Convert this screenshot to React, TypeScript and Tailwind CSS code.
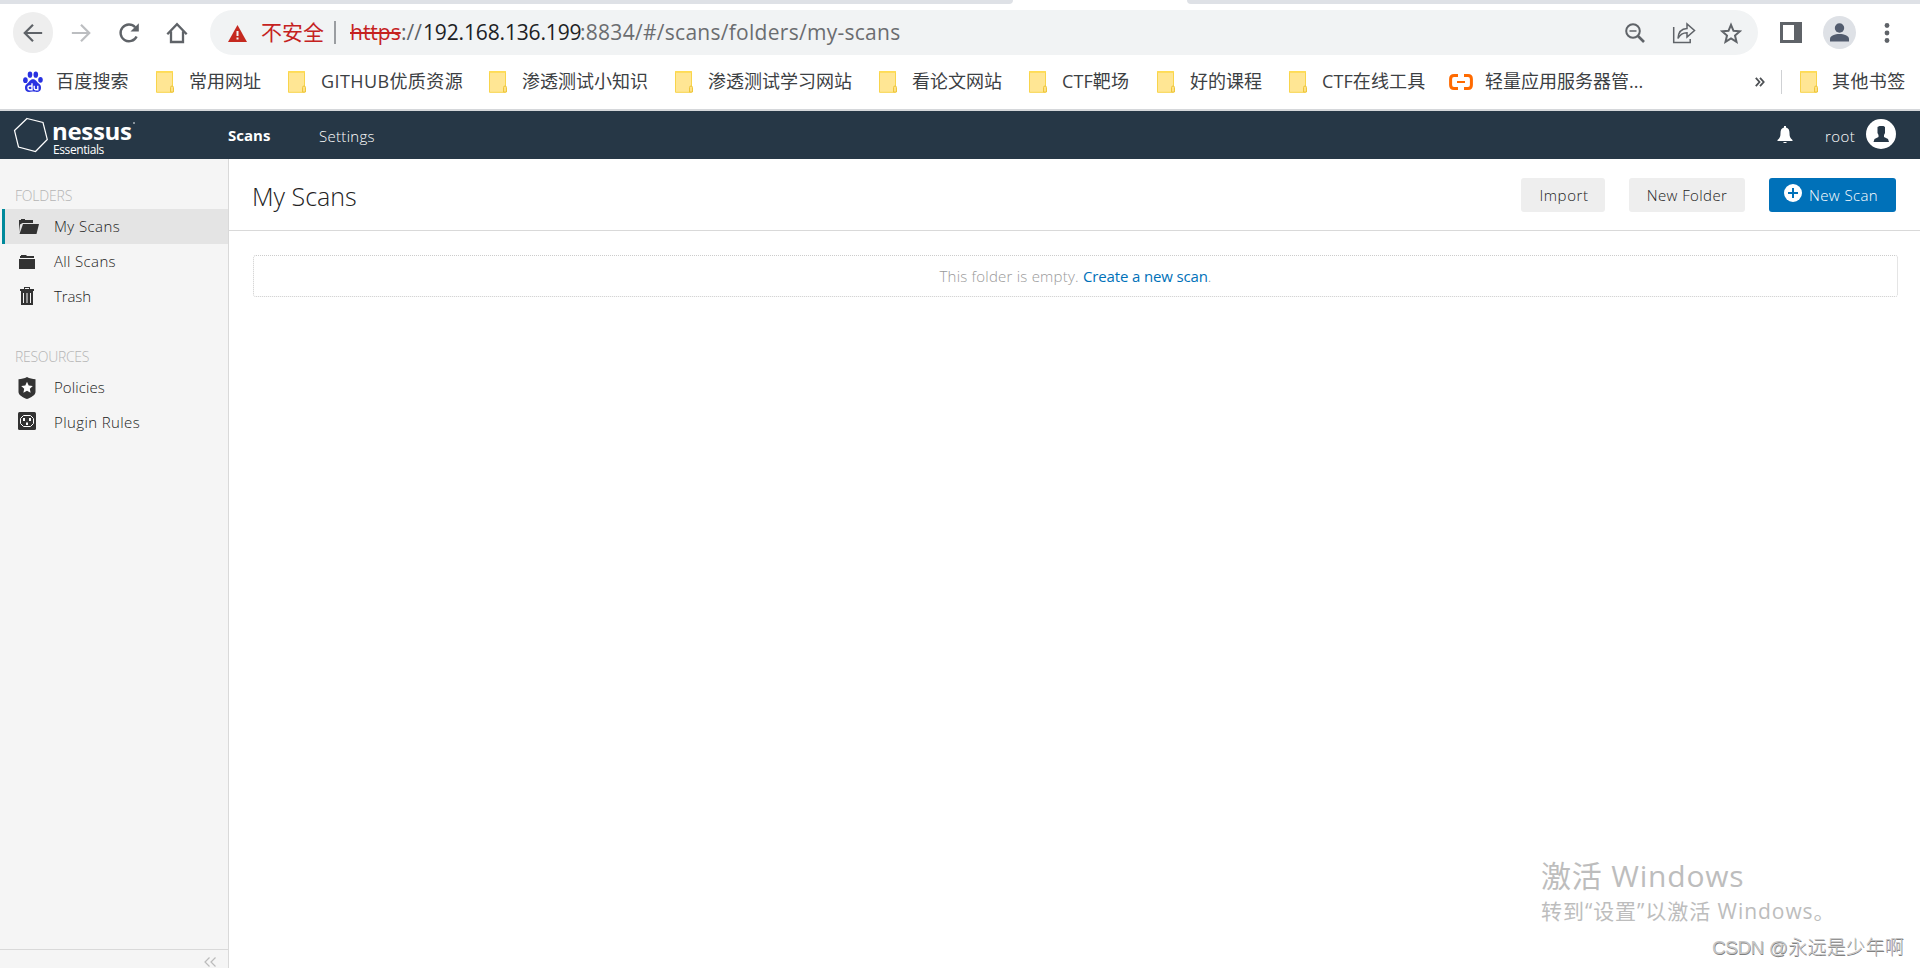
import React from "react";

const UI = "font-['Open_Sans','Noto_Sans_CJK_SC',sans-serif]";

function BackIcon({ flip = false, className = "" }: { flip?: boolean; className?: string }) {
  return (
    <svg width="24" height="24" viewBox="0 0 24 24" className={className} fill="none" stroke="currentColor" strokeWidth="2.4">
      {flip ? <path d="M2 12h18M12 3l9 9-9 9" /> : <path d="M22 12H4M12 3l-9 9 9 9" />}
    </svg>
  );
}

function ReloadIcon() {
  return (
    <svg width="22" height="22" viewBox="0 0 22 22" fill="none" className="text-[#5f6368]">
      <path d="M18.6 14.4A8.4 8.4 0 1 1 17.2 5.2" stroke="currentColor" strokeWidth="2.4" />
      <path d="M20.8 1.2v8.3h-8.3z" fill="currentColor" />
    </svg>
  );
}

function HomeIcon() {
  return (
    <svg width="22" height="22" viewBox="0 0 22 22" fill="none" className="text-[#5f6368]">
      <path d="M1.3 12.2 11 2.2l9.7 10M5 9.500V20h12V9.500" stroke="currentColor" strokeWidth="2.300" />
    </svg>
  );
}

function FolderMark() {
  return (
    <svg width="19" height="22" viewBox="0 0 19 22" className="shrink-0">
      <path d="M.5.8h16v20.500H.5z" fill="#ffe694" stroke="#f8d44c" />
      <path d="M0 .9h17" stroke="#ffdb4f" strokeWidth="1.500" />
      <path d="M14.500 21v-4.500q0-1.500 1.500-1.500t1.500 1.500V21z" fill="#ffe082" stroke="#edc63c" />
    </svg>
  );
}

function BaiduMark() {
  return (
    <svg width="20" height="22" viewBox="0 0 20 22" className="shrink-0">
      <g fill="#2932e1">
        <ellipse cx="2.400" cy="9.200" rx="2.300" ry="2.900" />
        <ellipse cx="7" cy="3.700" rx="2.300" ry="3.100" />
        <ellipse cx="12.800" cy="3.700" rx="2.300" ry="3.100" />
        <ellipse cx="17.500" cy="8.800" rx="2.300" ry="2.900" />
        <path d="M10 8.200c3 0 3.700 2.600 5.800 4.300 1.600 1.300 2.400 2.500 2.200 4.800-.2 2.700-2 3.700-4.300 3.600-1.500 0-2-.3-3.700-.3s-2.200.3-3.700.3C4 21 2.200 20 2 17.300c-.2-2.300.6-3.500 2.200-4.800C6.300 10.800 7 8.200 10 8.200z" />
      </g>
      <path d="M9 12.300v6.400H6.800a1.700 1.700 0 0 1 0-3.700H9M11.200 14.800v2.500q0 1.400 1.400 1.400h2.200v-3.900" fill="none" stroke="#fff" strokeWidth="1.400" />
    </svg>
  );
}

function CloudMark() {
  return (
    <svg width="24" height="16" viewBox="0 0 24 16" className="shrink-0" fill="none" stroke="#ff6a00">
      <path d="M9 1.500H5Q1.600 1.500 1.600 5v6q0 3.500 3.400 3.500h4M15 1.500h4q3.400 0 3.400 3.500v6q0 3.500-3.400 3.500h-4" strokeWidth="3" />
      <path d="M8 8h8" strokeWidth="2" />
    </svg>
  );
}

const marks = [
  { label: "常用网址", box: "w-[132px]", sp: "tracking-[0px]" },
  { label: "GITHUB优质资源", box: "w-[201px]", sp: "tracking-[0.4px]" },
  { label: "渗透测试小知识", box: "w-[186px]", sp: "tracking-[0px]" },
  { label: "渗透测试学习网站", box: "w-[204px]", sp: "tracking-[0px]" },
  { label: "看论文网站", box: "w-[150px]", sp: "tracking-[0px]" },
  { label: "CTF靶场", box: "w-[128px]", sp: "tracking-[0.1px]" },
  { label: "好的课程", box: "w-[132px]", sp: "tracking-[0px]" },
  { label: "CTF在线工具", box: "w-[160px]", sp: "tracking-[0.1px]" },
];

function Browser() {
  return (
    <header className="h-[111px] shrink-0 border-b-2 border-[#d5d7da] bg-white">
      <div className="flex h-1 justify-between">
        <div className="w-[1013px] rounded-br-[5px] bg-[#dee1e6]" />
        <div className="w-[733px] rounded-bl-[5px] bg-[#dee1e6]" />
      </div>
      <div className="flex h-[57px] items-center">
        <div className="ml-[13px] flex h-[41px] w-10 shrink-0 items-center justify-center rounded-full bg-[#eeeeee]">
          <BackIcon className="h-[22px] w-[22px] text-[#5f6368]" />
        </div>
        <BackIcon flip className="ml-[17px] h-[22px] w-[22px] text-[#bcbec1]" />
        <div className="ml-[26px]"><ReloadIcon /></div>
        <div className="ml-[26px]"><HomeIcon /></div>
        <div className="ml-[22px] flex h-[45px] w-[1548px] shrink-0 items-center rounded-full bg-[#f1f3f4] pl-[18px] text-[21px] whitespace-nowrap">
          <svg width="19" height="17" viewBox="0 0 19 17" className="mt-[2px]">
            <path d="M9.500 0 19 17H0z" fill="#c5291f" />
            <path d="M9.500 6v5M9.500 12.500v2" stroke="#f1f3f4" strokeWidth="2" />
          </svg>
          <span className="ml-[14px] w-[73px] text-[#c5221f]">不安全</span>
          <span className="h-[23px] w-[2px] bg-[#9a9da1]" />
          <span className="ml-[14px] w-[51px] text-[#c5221f] line-through">https</span>
          <span className="w-[22px] text-[#5f6368]">://</span>
          <span className="w-[157px] tracking-[-0.15px] text-[#202124]">192.168.136.199</span>
          <span className="w-[1045px] tracking-[0.28px] text-[#6b6d70]">:8834/#/scans/folders/my-scans</span>
          <svg width="20" height="20" viewBox="0 0 20 20" fill="none" stroke="#5f6368" className="shrink-0">
            <circle cx="8" cy="8" r="6.800" strokeWidth="2" />
            <path d="m13 13 6 6" strokeWidth="2.600" />
            <path d="M4.500 8h7" strokeWidth="1.500" />
          </svg>
          <svg width="24" height="22" viewBox="0 0 24 22" fill="none" stroke="#5f6368" strokeWidth="1.500" className="ml-[27px] shrink-0">
            <path d="M1.700 5v15.500h16.500V17" />
            <path d="M6 16.500c.3-6 3.500-9.800 9-10V2l7.500 6.500L15 15v-4.300c-4.500 0-7 1.800-9 5.800z" />
          </svg>
          <svg width="22" height="22" viewBox="0 0 22 22" fill="none" stroke="#5f6368" strokeWidth="2" className="ml-[24px] shrink-0">
            <path d="m11 2.800 2.500 6 6.400.5-4.900 4.200 1.500 6.300-5.500-3.400-5.500 3.400L7 13.500 2.100 9.300l6.400-.5z" />
          </svg>
        </div>
        <svg width="22" height="21" viewBox="0 0 22 21" className="ml-[22px]">
          <path d="M0 0h22v21H0z" fill="#5f6368" />
          <path d="M3 3h11v15H3z" fill="#fff" />
        </svg>
        <svg width="33" height="33" viewBox="0 0 33 33" className="ml-[21px]">
          <circle cx="16.500" cy="16.500" r="16.500" fill="#dee1e6" />
          <circle cx="16.500" cy="12" r="4.700" fill="#525c6e" />
          <path d="M7 25.500v-2.500c0-3.300 5-5 9.500-5s9.500 1.700 9.500 5v2.500z" fill="#525c6e" />
        </svg>
        <svg width="6" height="22" viewBox="0 0 6 22" className="ml-[28px]" fill="#5f6368">
          <circle cx="3" cy="3.500" r="2.400" />
          <circle cx="3" cy="11" r="2.400" />
          <circle cx="3" cy="18.500" r="2.400" />
        </svg>
      </div>
      <div className="flex h-[42px] items-center text-[18px] leading-[26px] whitespace-nowrap text-[#3c4043]">
        <div className="ml-[23px] flex w-[133px] shrink-0 items-center gap-[13px]">
          <BaiduMark />
          <span className="pb-[2px] tracking-[0.2px]">百度搜索</span>
        </div>
        {marks.map((m) => (
          <div key={m.label} className={`flex shrink-0 items-center gap-[14px] ${m.box}`}>
            <FolderMark />
            <span className={`pb-[2px] ${m.sp}`}>{m.label}</span>
          </div>
        ))}
        <div className="flex w-[306px] shrink-0 items-center gap-[12px]">
          <CloudMark />
          <span className="pb-[2px]">轻量应用服务器管...</span>
        </div>
        <svg width="10" height="10" viewBox="0 0 10 10" fill="none" stroke="#4d5054" strokeWidth="1.800">
          <path d="m.8.8 3.700 4.200L.8 9.200M5 .8 8.700 5 5 9.200" />
        </svg>
        <span className="ml-[16px] h-6 w-px bg-[#cfd1d4]" />
        <div className="ml-[18px] flex items-center gap-[13px]">
          <FolderMark />
          <span className="pb-[2px] tracking-[0.4px]">其他书签</span>
        </div>
      </div>
    </header>
  );
}

function NavBar() {
  return (
    <nav className="flex h-12 shrink-0 items-center bg-[#263746] text-[15px] text-white">
      <svg width="36" height="36" viewBox="0 0 36 36" className="ml-[13px]" fill="none" stroke="#fff" strokeWidth="1.200">
        <path d="M14 1.500 30 5.500l4.300 17L22.500 34.500 5.500 30 1.500 13.500z" />
      </svg>
      <div className="ml-[3px] flex w-[176px] flex-col pt-[5px]">
        <div className="flex items-start">
          <span className="text-[24px] leading-[24px] font-bold tracking-[-0.3px]">nessus</span>
          <span className="mt-[3px] ml-px h-[2px] w-[2px] rounded-full bg-[#a8b0b7]" />
        </div>
        <span className="pl-px text-[12px] leading-[14px] tracking-[-0.4px]">Essentials</span>
      </div>
      <span className="w-[91px] font-bold">Scans</span>
      <span className="pt-[2px] font-light tracking-[0.3px]">Settings</span>
      <svg width="16" height="18" viewBox="0 0 16 18" className="ml-auto" fill="#fff">
        <path d="M7 0h2v1.500c2.500.5 3.500 2.500 3.500 5.500 0 3.500.5 5 3 7v1H.5v-1c2.500-2 3-3.500 3-7 0-3 1-5 3.500-5.500zM6.500 16h3v1h-3z" />
      </svg>
      <span className="ml-[32px] w-[41px] pt-[2px] font-light tracking-[0.4px]">root</span>
      <svg width="30" height="30" viewBox="0 0 30 30" className="mr-[24px] mb-[2px]">
        <circle cx="15" cy="15" r="15" fill="#fff" />
        <path d="M11.500 8l2-1h4l1.500 1v6l-1 2v2l4 2 1 3H7.500l1-3 4-2v-2l-1-2z" fill="#263746" />
      </svg>
    </nav>
  );
}

const icons: Record<string, React.ReactNode> = {
  open: (
    <svg width="20" height="15" viewBox="0 0 20 15" fill="#333">
      <path d="M0 13V1h2V0h4v1h8v3H3.500L1 5.500z" />
      <path d="M4 5h16l-2.500 10H.5z" />
    </svg>
  ),
  folder: (
    <svg width="16" height="14" viewBox="0 0 16 14" fill="#333">
      <path d="M0 4h16v10H0zM2 0h5l1 1h7v2H1V1h1z" />
    </svg>
  ),
  trash: (
    <svg width="14" height="18" viewBox="0 0 14 18" fill="#333" className="mb-px ml-px">
      <path fillRule="evenodd" d="M4 0h6v2h4v2H0V2h4zM5 1v1h4V1zM1 4h12v14H1zM3 6v10h1V6zM6.500 6v10h1V6zM10 6v10h1V6z" />
    </svg>
  ),
  shield: (
    <svg width="18" height="22" viewBox="0 0 18 22" className="-ml-px">
      <path d="M9 0c2.500 1.500 5.500 2 8.500 2.300V15c0 3-4.500 5.500-8.500 7C5 20.500.5 18 .5 15V2.300C3.500 2 6.500 1.500 9 0z" fill="#333" />
      <path d="m9 4.800 1.700 3.800 4.100.4-3 2.800.8 4L9 13.800l-3.600 2 .8-4-3-2.800 4.100-.4z" fill="#fff" />
    </svg>
  ),
  plugin: (
    <svg width="18" height="18" viewBox="0 0 18 18" className="mb-[3px] -ml-px">
      <rect width="18" height="18" rx="1.500" fill="#333" />
      <path d="M5.500 3.500h7l3 3v5l-3 3h-7l-3-3v-5z" fill="none" stroke="#fff" />
      <path d="M5 6h2v3H5zM11 6h2v3h-2zM8 10.500h2V13H8z" fill="#fff" />
    </svg>
  ),
};

function Item({ icon, label, active = false, sp }: { icon: string; label: string; active?: boolean; sp: string }) {
  return (
    <div
      className={`ml-[2px] flex h-[35px] items-center border-l-[3px] pl-[14px] text-[15px] font-light text-[#222] ${
        active ? "border-[#00899b] bg-[#e4e4e4]" : "border-transparent"
      }`}
    >
      <span className="w-[35px]">{icons[icon]}</span>
      <span className={sp}>{label}</span>
    </div>
  );
}

function Sidebar() {
  return (
    <aside className="flex w-[229px] shrink-0 flex-col border-r border-[#d9d9d9] bg-[#f5f5f5]">
      <h2 className="mt-[27px] h-[23px] pl-[15px] text-[14px] leading-[20px] font-light tracking-[-0.2px] text-[#b4b4b4]">FOLDERS</h2>
      <Item icon="open" label="My Scans" active sp="tracking-[0.4px]" />
      <Item icon="folder" label="All Scans" sp="tracking-[0.35px]" />
      <Item icon="trash" label="Trash" sp="tracking-[-0.1px]" />
      <h2 className="mt-[33px] h-[23px] pl-[15px] text-[14px] leading-[20px] font-light tracking-[-0.3px] text-[#b4b4b4]">RESOURCES</h2>
      <Item icon="shield" label="Policies" sp="tracking-[0.1px]" />
      <Item icon="plugin" label="Plugin Rules" sp="tracking-[0.4px]" />
      <div className="mt-auto flex h-[19px] justify-end border-t border-[#d9d9d9] pt-[7px] pr-[12px]">
        <svg width="12" height="10" viewBox="0 0 12 10" fill="none" stroke="#bbb" strokeWidth="1.200">
          <path d="M5.500.5 1 5l4.500 4.500M11.500.5 7 5l4.500 4.500" />
        </svg>
      </div>
    </aside>
  );
}

function Main() {
  return (
    <main className="flex-1 font-light">
      <div className="flex h-[72px] items-center border-b border-[#d9d9d9] pr-[24px] pl-[23px] text-[15px] text-[#222]">
        <h1 className="mr-auto pt-1 text-[25px]">My Scans</h1>
        <button className="h-[34px] w-[84px] rounded-[3px] bg-[#eee] pt-[2px] pl-[2px] tracking-[0.6px]">Import</button>
        <button className="ml-[24px] h-[34px] w-[116px] rounded-[3px] bg-[#eee] pt-[2px] tracking-[0.4px]">New Folder</button>
        <button className="ml-[24px] flex h-[34px] w-[127px] items-center rounded-[3px] bg-[#0071b9] pl-[15px] text-white">
          <svg width="18" height="18" viewBox="0 0 18 18" className="mr-[7px] mb-[4px]">
            <circle cx="9" cy="9" r="9" fill="#fff" />
            <path d="M9 4v10M4 9h10" stroke="#0071b9" strokeWidth="2" />
          </svg>
          <span className="pt-[2px] tracking-[0.4px]">New Scan</span>
        </button>
      </div>
      <div className="mt-[24px] mr-[22px] ml-[24px] flex h-[42px] items-center justify-center rounded-[3px] border border-dotted border-[#ccc] text-[15px] text-[#999]">
        <p className="tracking-[0.22px]">
          This folder is empty. <a className="font-normal tracking-[-0.15px] text-[#0071b9]">Create a new scan</a>.
        </p>
      </div>
    </main>
  );
}

export default function App() {
  return (
    <div className={`relative flex h-[968px] w-[1920px] flex-col overflow-hidden bg-white ${UI}`}>
      <Browser />
      <NavBar />
      <div className="flex flex-1">
        <Sidebar />
        <Main />
      </div>
      <div className="absolute top-[854px] left-[1541px] whitespace-nowrap text-[#bdbdbd]">
        <p className="text-[30px] leading-[44px] tracking-[0.8px]">激活 Windows</p>
        <p className="text-[21px] leading-[26px] tracking-[0.95px]">转到“设置”以激活 Windows。</p>
      </div>
      <p className="absolute top-[935px] left-[1712px] font-['Liberation_Sans','Noto_Sans_CJK_SC',sans-serif] text-[19px] leading-[26px] font-light whitespace-nowrap text-[#c6c6c6] [text-shadow:0.5px_0.5px_0_#808080]">
        <span className="tracking-[-0.5px]">CSDN </span>
        <span className="tracking-[0.3px]">@永远是少年啊</span>
      </p>
    </div>
  );
}
